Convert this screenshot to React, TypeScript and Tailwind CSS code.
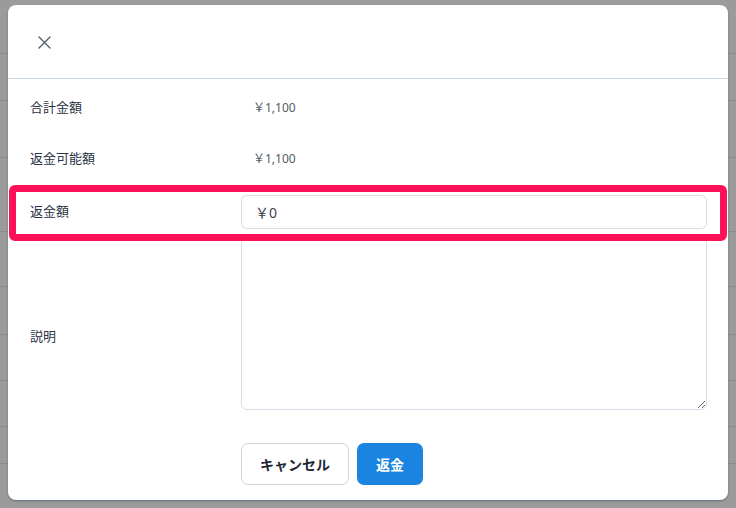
import React from "react";

const lineYs = [53, 100, 157, 231, 286, 334, 380, 426, 463];

export default function App() {
  return (
    <div
      className="relative w-[736px] h-[508px] overflow-hidden bg-[#9b9b9b]"
      style={{ fontFamily: '"Noto Sans", "Noto Sans CJK JP", sans-serif' }}
    >
      {/* backdrop page rows */}
      <div className="absolute inset-0 pointer-events-none">
        {lineYs.map((y) => (
          <div key={y} className="absolute left-0 right-0 h-px bg-[#8c8c8c]" style={{ top: y }} />
        ))}
      </div>

      {/* dialog */}
      <div className="absolute left-[8px] top-[5px] w-[720px] h-[495px] bg-white rounded-[8px] shadow-[0_1px_2px_rgba(60,80,110,0.6)] flex flex-col">
        <div className="h-[74px] flex items-center pl-[30px] border-b border-[#c9d6e3]">
          <svg width="13" height="13" viewBox="0 0 13 13" className="mt-[1px]">
            <path d="M1 1 L12 12 M12 1 L1 12" stroke="#56606e" strokeWidth="1.4" strokeLinecap="round" />
          </svg>
        </div>

        <div className="flex flex-col pl-[22px] pr-[21px] pt-[16px] text-[13px] text-[#2b3445]">
          <div className="flex items-center h-[26px]">
            <div className="w-[211px]">合計金額</div>
            <div className="pl-[12px] text-[12px] text-[#555b63]">￥1,100</div>
          </div>
          <div className="flex items-center h-[26px] mt-[25px]">
            <div className="w-[211px]">返金可能額</div>
            <div className="pl-[12px] text-[12px] text-[#555b63]">￥1,100</div>
          </div>
          <div className="flex items-center h-[34px] mt-[23px]">
            <div className="w-[211px]">返金額</div>
            <div className="flex-1 h-[34px] border border-[#d5dee8] rounded-[6px] flex items-center pl-[13px] text-[14px] text-[#3d4450]">
              ￥0
            </div>
          </div>
          <div className="flex items-center h-[172px] mt-[9px]">
            <div className="w-[211px] pt-[26px]">説明</div>
            <textarea className="flex-1 h-[172px] border border-[#d5dee8] rounded-[6px] resize-y outline-none" />
          </div>
          <div className="flex items-center h-[42px] mt-[33px]">
            <div className="w-[211px]" />
            <button className="w-[108px] h-[42px] border border-[#ccd6e0] rounded-[7px] bg-white text-[14px] font-bold text-[#1f2633]">
              キャンセル
            </button>
            <button className="ml-[8px] w-[66px] h-[42px] rounded-[7px] bg-[#1b84e0] text-[14px] font-bold text-white">
              返金
            </button>
          </div>
        </div>
      </div>

      {/* highlight */}
      <div className="absolute left-[9px] top-[185px] w-[718px] h-[56px] border-[7px] border-[#ff1158] rounded-[6px] pointer-events-none" />
    </div>
  );
}
